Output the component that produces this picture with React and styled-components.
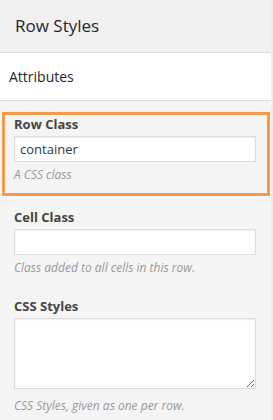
import React from "react";
import styled, { createGlobalStyle } from "styled-components";

const GlobalStyle = createGlobalStyle`
  html, body {
    margin: 0;
    padding: 0;
    background: #f1f1f1;
  }
  body {
    font-family: "Open Sans", "Liberation Sans", sans-serif;
    color: #444;
  }
`;

function App() {
  return (
    <>
      <GlobalStyle />
      <Panel>
        <Header>
          <Title>Row Styles</Title>
        </Header>
        <Section>
          <SectionTitle>Attributes</SectionTitle>
        </Section>
        <Form>
          <Field highlighted>
            <Label>Row Class</Label>
            <TextInput type="text" defaultValue="container" />
            <Help>A CSS class</Help>
          </Field>
          <Field>
            <Label>Cell Class</Label>
            <TextInput type="text" />
            <Help>Class added to all cells in this row.</Help>
          </Field>
          <Field>
            <Label>CSS Styles</Label>
            <TextArea />
            <Help>CSS Styles, given as one per row.</Help>
          </Field>
        </Form>
      </Panel>
    </>
  );
}

const Panel = styled.div`
  width: 271px;
  min-height: 420px;
  background: #f5f5f5;
  border-right: 2px solid #ececec;
`;

const Header = styled.div`
  height: 53px;
  box-sizing: border-box;
  padding: 15px 15px 0;
  background: #f1f1f1;
  border-bottom: 1px solid #dcdcdc;
`;

const Title = styled.h1`
  margin: 0;
  font-size: 17px;
  line-height: 22px;
  font-weight: 400;
  color: #23282d;
`;

const Section = styled.div`
  height: 48px;
  box-sizing: border-box;
  padding: 0 9px;
  display: flex;
  align-items: center;
  background: #fff;
  border-bottom: 1px solid #dcdcdc;
`;

const SectionTitle = styled.h3`
  margin: 0;
  font-size: 14px;
  font-weight: 400;
  color: #23282d;
`;

const Form = styled.div`
  padding: 11px 15px 0 14px;
`;

const Field = styled.div`
  display: flex;
  flex-direction: column;
  padding: ${(p) => (p.highlighted ? "0 11px 9px 9px" : "0 0 20px")};
  margin: ${(p) => (p.highlighted ? "0 -14px 12px -12px" : "0")};
  border: ${(p) => (p.highlighted ? "3px solid #f7984a" : "none")};
`;

const Label = styled.label`
  font-size: 13px;
  line-height: 18px;
  font-weight: 700;
  color: #444;
  margin-bottom: 3px;
`;

const TextInput = styled.input`
  height: 26px;
  box-sizing: border-box;
  padding: 0 5px;
  border: 1px solid #ddd;
  box-shadow: inset 0 1px 2px rgba(0, 0, 0, 0.07);
  background: #fff;
  font-family: inherit;
  font-size: 13px;
  color: #32373c;
  outline: none;
`;

const TextArea = styled.textarea`
  height: 71px;
  box-sizing: border-box;
  padding: 4px 5px;
  border: 1px solid #ddd;
  box-shadow: inset 0 1px 2px rgba(0, 0, 0, 0.07);
  background: #fff;
  font-family: inherit;
  font-size: 13px;
  resize: vertical;
  outline: none;
  margin-bottom: 4px;
`;

const Help = styled.p`
  margin: 4px 0 0;
  font-size: 12px;
  line-height: 18px;
  font-style: italic;
  color: #999;
`;

export default App;
